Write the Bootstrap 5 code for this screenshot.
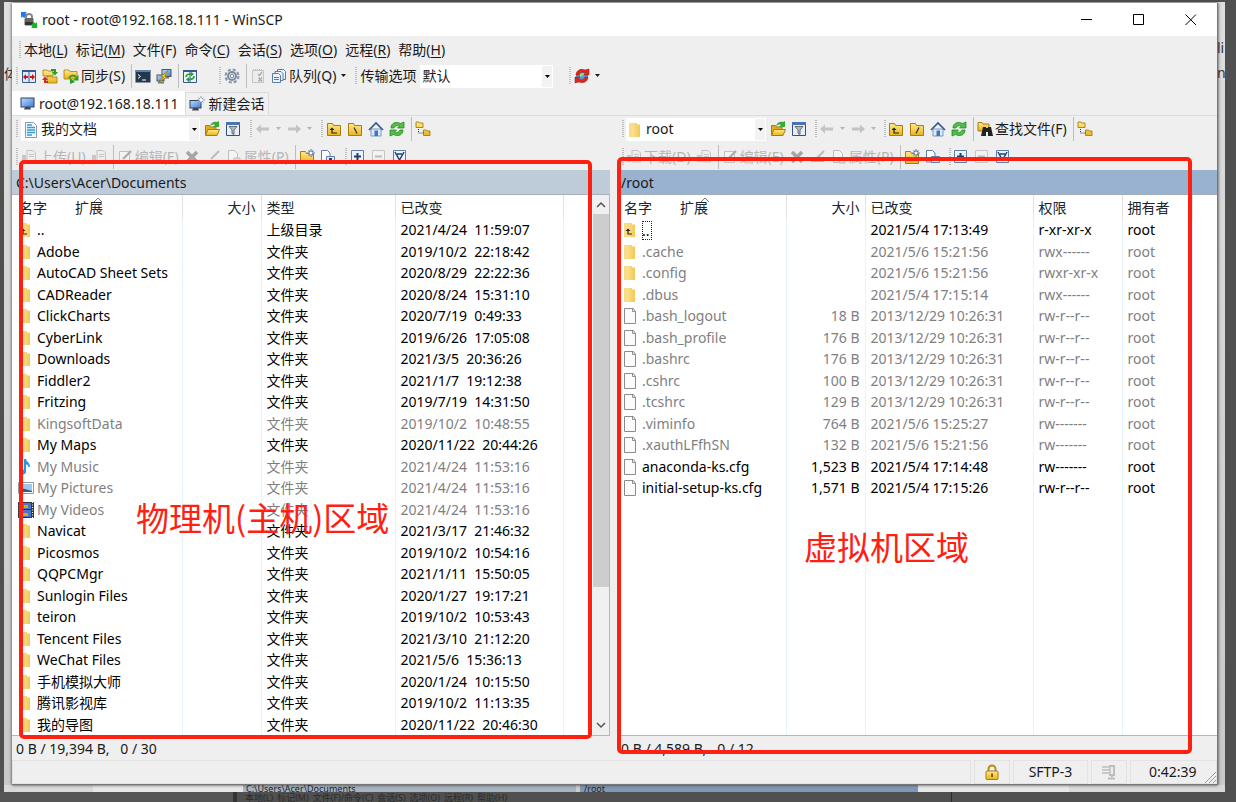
<!DOCTYPE html>
<html lang="zh-CN">
<head>
<meta charset="utf-8">
<meta name="viewport" content="width=device-width, initial-scale=1">
<title>root - root@192.168.18.111 - WinSCP</title>
<link href="https://cdn.jsdelivr.net/npm/bootstrap@5.3.0/dist/css/bootstrap.min.css" rel="stylesheet">
<style>
  :root { --face: #efefef; --mark-red: #ff2012; }
  body {
    background: #4f504f; color: #1a1a1a; font-size: 14px; line-height: 20px;
    font-family: "Noto Sans", "Noto Sans CJK SC", sans-serif;
  }
  svg { display: block; flex: none; }
  .ic { width: 16px; height: 16px; }
  u { text-underline-offset: 2px; text-decoration-thickness: 1px; }

  .backdrop { margin: 2px 11px 0 4px; padding: 1px 7px 0 8px; background: linear-gradient(#dedede, #c9c9c9); }
  .sliver { position: absolute; overflow: hidden; width: 8px; color: #333; white-space: nowrap; line-height: 20px; }
  .app { background: var(--face); box-shadow: 0 0 3px #333; border-right: 1px solid #777; border-bottom: 1px solid #777; }

  .titlebar { height: 33px; background: #fff; padding-left: 8px; }
  .win-btn { width: 52px; height: 33px; padding: 0; border: 0; background: none; display: flex; align-items: center; justify-content: center; }
  .menubar { height: 27px; padding-left: 3px; }
  .menubar a { color: #1a1a1a; text-decoration: none; margin-right: 8px; }

  .bar { height: 26px; white-space: nowrap; overflow: hidden; }
  .bar button { border: 0; background: none; padding: 0 5px 0 0; color: #1a1a1a; display: flex; align-items: center; gap: 2px; height: 24px; flex: none; }
  .bar button:disabled { color: #b5b5b5; }
  .bar button.drop { width: 15px; padding: 0; justify-content: center; }
  .bar-address { height: 24px; }
  .bar-address + .bar { margin-top: 3px; }
  .grip { width: 9px; height: 18px; flex: none; background: repeating-linear-gradient(#bdbdbd 0 1px, transparent 1px 2px) 4px 0 / 2px 100% no-repeat; }
  .grip-apart { margin-left: 12px; }
  .rule { width: 5px; height: 24px; flex: none; background: linear-gradient(#bdbdbd, #bdbdbd) 1px 0 / 1px 100% no-repeat; }
  .combo {
    appearance: none; border: 0; border-radius: 0; height: 23px; padding: 0 12px 0 2px; color: #1a1a1a; flex: none;
    background: url("data:image/svg+xml,%3Csvg xmlns='http://www.w3.org/2000/svg' width='11' height='23'%3E%3Cpath fill='%23f2f2f2' d='M0 1h10v21H0z'/%3E%3Cpath fill='%23000' d='M3 10h5L5.500 13z'/%3E%3C/svg%3E") right center no-repeat #fff;
  }
  .combo.with-icon { padding-left: 20px; }
  .combo-wrap { position: relative; flex: none; margin-right: 4px; }
  .combo-wrap svg { position: absolute; left: 2px; top: 4px; }

  .tabs { height: 24px; margin-top: 3px; border-bottom: 1px solid #dcdcdc; }
  .tabs button { height: 23px; border: 1px solid #dcdcdc; border-bottom: 0; background: #f0f0f0; padding: 0 4px 0 3px; display: flex; align-items: center; gap: 3px; color: #1a1a1a; }
  .tabs button.active { height: 24px; background: #fff; padding: 0 6px 0 7px; border-color: #fff; }

  .panes { gap: 9px; padding-top: 1px; }
  .pane { flex: 1 1 0; min-width: 0; position: relative; }
  .path { height: 25px; line-height: 25px; padding-left: 4px; background: #becbd9; border-bottom: 1px solid #a9b0ba; }
  .pane-remote .path { background: #98b2cf; padding-left: 2px; border-color: #a3aebb; }
  .pane-remote .grip { width: 7px; background-position: 3px 0; }
  .listing { background: #fff; border-bottom: 1px solid #b5b7c0; overflow: hidden; }

  .files { table-layout: fixed; height: 100%; margin: 0; }
  .files > :not(caption) > * > * {
    padding: 0 5px; border: 0; border-right: 1px solid #eaf2fb; color: inherit; background: none; white-space: pre; overflow: hidden; font-weight: 400; line-height: 20px; vertical-align: middle; box-shadow: none;
  }
  .files > thead > tr > th { border-right-color: #e2e2e2; padding-top: 2px; }
  .files > :not(caption) > * > *:last-child { border-right-color: transparent; }
  .files thead tr { height: 24px; }
  .files tbody tr { height: 21px; color: #000; }
  .files tbody tr:nth-child(odd) { height: 22px; }
  .files tbody tr.dim { color: #7f7f7f; }
  .files tbody tr.rest { height: auto; }
  .files td.num, .files th.num { text-align: right; }
  .fname { display: flex; align-items: center; gap: 3px; height: 20px; }
  .files .fcell { padding-left: 6px; }
  .pane-remote .files .fcell { padding-left: 4px; }
  .focus-box { outline: 1px dotted #222; outline-offset: -1px; height: 19px; line-height: 19px; padding-right: 2px; }
  .hname { padding-left: 2px; display: flex; position: relative; }
  .pane-remote .hname { padding-left: 0; }
  .hname span + span { margin-left: 28px; }
  .hname svg { position: absolute; left: 76px; top: -1px; }

  .scroll { width: 17px; background: #f0f0f0; border-right: 1px solid #b5b7c0; }
  .scroll .arrow { height: 19px; display: flex; align-items: center; justify-content: center; }
  .thumb { background: #cdcdcd; flex: 0 0 69%; }
  .track { flex: 1; }
  .pane-foot { height: 24px; line-height: 26px; padding-left: 4px; white-space: pre; }
  .pane-remote .pane-foot { padding-left: 2px; }

  .frame { position: absolute; border: 4px solid var(--mark-red); border-radius: 5px; pointer-events: none; }
  .frame-local { inset: 43px 18px 21px 7px; }
  .frame-remote { inset: 40px 25px 6px -2px; }
  .note { position: absolute; color: var(--mark-red); font: 400 33px/40px "Noto Sans CJK SC", sans-serif; white-space: nowrap; }
  .note-local { left: 124px; top: 380px; }
  .note-remote { left: 185px; top: 409px; }

  .statusbar { height: 24px; gap: 3px; }
  .statusbar > div { border: 1px solid #e3e3e3; display: flex; align-items: center; justify-content: center; }
  .w-icon { width: 36px; } .w-proto { width: 75px; } .w-time { width: 87px; padding-left: 8px; position: relative; }
  .statusbar > .w-time { justify-content: start; padding-left: 18px; }
  .w-time svg { position: absolute; right: 0; bottom: 0; }

  .under { height: 7px; overflow: hidden; font-size: 9px; line-height: 8px; color: #222; margin-left: -8px; margin-right: -7px; background: #d9d9d9; }
  .under div:nth-child(1) { width: 89px; }
  .under div:nth-child(2) { width: 150px; background: #e7e7e7; }
  .under div:nth-child(3) { width: 337px; background: #a8b4c0; padding-left: 3px; border-right: 4px solid #ccc; }
  .under div:nth-child(4) { width: 338px; background: #7f98b6; padding-left: 4px; }
  .under div:nth-child(5) { width: 151px; background: #e7e7e7; }
  .ghost-menu { height: 11px; overflow: hidden; font-size: 9px; line-height: 11px; color: #2b2b2b; white-space: nowrap; }
  .ghost-menu div:nth-child(1) { width: 233px; background: #555; }
  .ghost-menu div:nth-child(2) { width: 719px; border-left: 4px solid #333; border-right: 1px solid #2b2b2b; padding-left: 8px; gap: 4px; }
</style>
</head>
<body>

<svg width="0" height="0" class="position-absolute" aria-hidden="true">
  <defs>
    <linearGradient id="gold" x1="0" y1="0" x2="0" y2="1"><stop offset="0" stop-color="#ffe98a"/><stop offset="1" stop-color="#e9b41c"/></linearGradient>
    <linearGradient id="blue" x1="0" y1="0" x2="1" y2="1"><stop offset="0" stop-color="#b9dcff"/><stop offset="1" stop-color="#3c7fd6"/></linearGradient>
    <linearGradient id="pale" x1="0" y1="0" x2="1" y2="0"><stop offset="0" stop-color="#ffe9a2"/><stop offset="1" stop-color="#f3c956"/></linearGradient>
  </defs>
  <symbol id="i-app" viewBox="0 0 18 18"><path fill="#1f7bea" d="M1 1h6L5.500 2.500 7 4 4 7 2.500 5.500 1 7z"/><path fill="none" stroke="#888" stroke-width="2" d="M6 8V6a3 3 0 0 1 6 0v2"/><rect x="4.500" y="7" width="9" height="7.500" rx="1" fill="#666"/><path fill="#333" d="M5 11h8v3H5z"/><path fill="#17b51f" d="M17 17h-6l1.500-1.500L11 14l3-3 1.500 1.500L17 11z"/></symbol>
  <symbol id="i-cols" viewBox="0 0 16 16"><path fill="#dfe9f7" stroke="#35588f" d="M1.500 2.500h13v12h-13zM8 3v11"/><path fill="#35588f" d="M1 2h14v2H1z"/><path fill="#c4161c" d="M2 9l3-3v2h2v2H5v2zM14 9l-3-3v2H9v2h2v2z"/></symbol>
  <symbol id="i-fold" viewBox="0 0 16 16"><path fill="url(#gold)" stroke="#a97c0c" d="M1.500 2.500h5l1 2h7v10h-13z"/></symbol>
  <symbol id="i-cmp" viewBox="0 0 16 16"><path fill="url(#gold)" stroke="#a97c0c" stroke-width=".8" d="M1 2h4l1 1h5v5H1zM5 8h4l1 1h5v6H5z"/><path fill="none" stroke="#2a9c2a" stroke-width="2" d="M9 2h4v3"/><path fill="#2a9c2a" d="M10 4h6l-3 3.500z"/><path fill="none" stroke="#d62a20" stroke-width="2" d="M6 14H3v-3"/><path fill="#d62a20" d="M0 12h6L3 8.500z"/></symbol>
  <symbol id="i-sync" viewBox="0 0 16 16"><path fill="url(#gold)" stroke="#a97c0c" stroke-width=".8" d="M1 2h5l1 1.500h7V11H1z"/><path fill="none" stroke="#2a9c2a" stroke-width="2" d="M6 10c2-3 5-3 7-1"/><path fill="#2a9c2a" d="M15.500 7v5.500H10zM7 16V10l5 4z"/></symbol>
  <symbol id="i-term" viewBox="0 0 16 16"><rect x=".5" y="2" width="15" height="12.500" fill="#22384f"/><path fill="#5c7fa8" d="M.5 2h15v2H.5z"/><path fill="none" stroke="#fff" d="M3 6.500l2.500 2L3 10.500M7 12h4"/></symbol>
  <symbol id="i-putty" viewBox="0 0 16 16"><rect x="6" y="1.500" width="9" height="7" fill="url(#blue)" stroke="#555"/><rect x="1" y="7" width="7" height="6" fill="url(#blue)" stroke="#555"/><path fill="#777" d="M2 14h6v1.500H2zM9 9h4v1.500H9z"/><path fill="#ffd21a" stroke="#8a6b00" stroke-width=".6" d="M12 3L5 8l2.500 1L3 14l8-5-2.500-1z"/></symbol>
  <symbol id="i-brw" viewBox="0 0 16 16"><path fill="#eaf2fc" stroke="#35588f" d="M1.500 2.500h13v12h-13zM8 4v10"/><path fill="#35588f" d="M1 2h14v2H1z"/><path fill="none" stroke="#2a9c2a" stroke-width="1.600" d="M4 9c0-2 2-3 5-3M12 8c0 2-2 3.500-5 3.500"/><path fill="#2a9c2a" d="M9 4l3 2-3 2.500zM7 9l-3 2.500L7 14z"/></symbol>
  <symbol id="i-gear" viewBox="0 0 16 16"><circle cx="8" cy="8" r="6.500" fill="none" stroke="#8795a5" stroke-width="2" stroke-dasharray="3.100 2"/><circle cx="8" cy="8" r="4" fill="#d6dfe8" stroke="#7c8b9b" stroke-width="2"/><circle cx="8" cy="8" r="1.700" fill="#fff" stroke="#7c8b9b"/></symbol>
  <symbol id="i-check" viewBox="0 0 16 16"><path fill="#ececec" stroke="#c6c6c6" d="M2.500 2.500h11v12h-11z"/><path stroke="#bbb" stroke-dasharray="1 1" d="M3 1.500h10"/><path fill="none" stroke="#a8a8a8" stroke-width="1.300" d="M8 6l1.500 1.500L12 4M8.500 9.500l3.500 4M12 9.500l-3.500 4"/></symbol>
  <symbol id="i-queue" viewBox="0 0 16 16"><g fill="#edf3fa" stroke="#5b7da8"><path d="M6.500 1.500h6l2 2v8h-8z"/><path d="M4 3.500h6l2 2v7H4z"/><path d="M1.500 5.500h6l2 2v7h-8z"/><path d="M3 9.500h5M3 11.500h5"/></g></symbol>
  <symbol id="i-globe" viewBox="0 0 16 16"><circle cx="8" cy="8" r="6" fill="#4e9be6"/><path fill="#8fdc80" d="M6 5l4 0-1 3-3 1zM9 11l3-2-1 3z"/><path fill="#d92a22" stroke="#9c120d" stroke-width=".5" d="M2 7C2 3 6 0 11 2l4-1v6h-5l1.500-2C9 3.500 6 4 5 7zM14 9c0 4-4 7-9 5l-4 1V9h5l-1.500 2c2.500 1.500 5.500 1 6.500-2z"/></symbol>
  <symbol id="i-mon" viewBox="0 0 16 16"><rect x="1" y="2" width="13" height="9" fill="url(#blue)" stroke="#33435c"/><path fill="#445" d="M5 11h5l1 2.500H4z"/></symbol>
  <symbol id="i-monnew" viewBox="0 0 16 16"><rect x="1" y="4.500" width="11" height="7.500" fill="url(#blue)" stroke="#33435c"/><path fill="#445" d="M4 12h5l1 2.500H3z"/><path fill="none" stroke="#7f9bc0" d="M12 0v8M8 4h8M9.500 1.500l5 5M14.500 1.500l-5 5"/><circle cx="12" cy="4" r="1.700" fill="#fff"/></symbol>
  <symbol id="i-doc" viewBox="0 0 16 16"><path fill="#f7fbff" stroke="#8f9aa6" d="M2.500.5h8l3 3v12h-11z"/><path stroke="#2f9bd6" stroke-width="1.300" d="M4 5.500h8M4 8h8M4 10.500h8M4 13h5"/><path fill="#60b6e6" d="M4 2h5v2H4z"/></symbol>
  <symbol id="i-open" viewBox="0 0 16 16"><path fill="#e2ac1b" stroke="#a97c0c" d="M1.500 14V4.500h4l1 1.500H12v3"/><path fill="url(#gold)" stroke="#a97c0c" d="M1.500 14.500l2.500-6h11.500l-2.500 6z"/><path fill="#39a834" d="M6 5c1-4 5-5 7-4l2-1v6H9l2-2c-2-1-3 0-5 1z"/></symbol>
  <symbol id="i-filt" viewBox="0 0 16 16"><path fill="#e6eefa" stroke="#2d5288" d="M1.500 1.500h13v13h-13z"/><path fill="#4774b5" d="M1 1h14v3H1z"/><path fill="#b5b8bd" stroke="#555" stroke-width=".8" d="M4 5.500h8L9 9v4.500l-2-1V9z"/></symbol>
  <symbol id="i-back" viewBox="0 0 16 16"><path fill="#c4c4c4" d="M1 8l5-4.500v3h8v3H6v3z"/></symbol>
  <symbol id="i-fwd" viewBox="0 0 16 16"><path fill="#c4c4c4" d="M15 8l-5-4.500v3H2v3h8v3z"/></symbol>
  <symbol id="i-up" viewBox="0 0 16 16"><use href="#i-fold"/><path fill="none" stroke="#222" stroke-width="1.200" d="M6 8v4h5"/><path fill="#222" d="M3.500 9L6 6.500 8.500 9z"/></symbol>
  <symbol id="i-root" viewBox="0 0 16 16"><use href="#i-fold"/><path stroke="#333" stroke-width="1.300" d="M7 6.500l3 6"/></symbol>
  <symbol id="i-rootr" viewBox="0 0 16 16"><use href="#i-fold"/><path stroke="#333" stroke-width="1.300" d="M10 6.500l-3 6"/></symbol>
  <symbol id="i-home" viewBox="0 0 16 16"><path fill="#dcebfb" stroke="#7d97b9" d="M3 8h10v7H3z"/><path fill="#3d76c2" d="M6.500 9.500h3.500V15H6.500z"/><path fill="none" stroke="#2e5a94" stroke-width="1.600" d="M1 9l7-7 7 7"/></symbol>
  <symbol id="i-ref" viewBox="0 0 16 16"><path fill="#4fbf45" stroke="#1b7f1b" stroke-width=".7" d="M2 7C2 2 7 0 11.500 2.500L15 1v6H8.500L10.500 5C8 4 5.500 5 5 7zM14 9c0 5-5 7-9.500 4.500L1 15V9h6.500l-2 2c2.500 1 5 0 5.500-2z"/></symbol>
  <symbol id="i-tree" viewBox="0 0 16 16"><path fill="url(#gold)" stroke="#a97c0c" stroke-width=".9" d="M1 1h3l.7 1H8v4.500H1zM8.500 9h3l.7 1H15v4.500H8.500z"/><path fill="none" stroke="#333" stroke-dasharray="1 1" d="M3.500 8v4h5"/></symbol>
  <symbol id="i-find" viewBox="0 0 16 16"><path fill="url(#gold)" stroke="#a97c0c" d="M1 1.500h4l1 1.500h6v7H1z"/><path fill="#222" d="M6 6h3v1h2V6h3l2 9h-5v-4H9v4H4z"/></symbol>
  <symbol id="i-up2" viewBox="0 0 16 16"><path fill="#eee" stroke="#c2c2c2" d="M6 1.500h6l2.500 2.500v9H6z"/><path fill="#c6c6c6" d="M8 5h5v1H8zM8 7h5v1H8zM1 6h4v7H1z"/></symbol>
  <symbol id="i-edit" viewBox="0 0 16 16"><path fill="#f3f3f3" stroke="#c2c2c2" d="M2.500 2.500h10v11h-10z"/><path stroke="#aaa" stroke-width="2.200" d="M6 10l8-8"/></symbol>
  <symbol id="i-del" viewBox="0 0 16 16"><path stroke="#a5a5a5" stroke-width="3.500" d="M3 3l10 10M13 3L3 13"/></symbol>
  <symbol id="i-ren" viewBox="0 0 16 16"><path fill="none" stroke="#bcbcbc" stroke-width="2" d="M1 12h13M6 10l8-8"/></symbol>
  <symbol id="i-prop" viewBox="0 0 16 16"><path fill="#f4f4f4" stroke="#bdbdbd" d="M2.500 1.500h6l3 3v9h-9z"/><path fill="#ddd" stroke="#bdbdbd" d="M8 9h6v5H8z"/></symbol>
  <symbol id="i-newf" viewBox="0 0 16 16"><use href="#i-fold"/><path stroke="#5c7dab" stroke-width="1.100" d="M12 0v8M8 4h8M9.500 1.500l5 5M14.500 1.500l-5 5"/><circle cx="12" cy="4" r="1.500" fill="#fff"/></symbol>
  <symbol id="i-newd" viewBox="0 0 16 16"><path fill="#fff" stroke="#5d7fae" d="M1.500 1.500h6l2.500 2.500v9H1.500z"/><path fill="#dce7f5" stroke="#5d7fae" d="M6.500 7.500h8v6h-8z"/><path fill="#2d4468" d="M9 9h3v3H9z"/></symbol>
  <symbol id="i-plus" viewBox="0 0 16 16"><path fill="#edf3fb" stroke="#5d7fae" d="M1.500 1.500h12v12h-12z"/><path stroke="#21406f" stroke-width="2" d="M4 7.500h7M7.500 4v7"/></symbol>
  <symbol id="i-minus" viewBox="0 0 16 16"><path fill="#f2f2f2" stroke="#c5c5c5" d="M1.500 1.500h12v12h-12z"/><path stroke="#bbb" stroke-width="2" d="M4 7.500h7"/></symbol>
  <symbol id="i-vee" viewBox="0 0 16 16"><path fill="#edf3fb" stroke="#5d7fae" d="M1.500 1.500h12v12h-12z"/><path fill="none" stroke="#21406f" stroke-width="1.500" d="M3 3l4.500 8L12 3M5 5h5"/></symbol>
  <symbol id="i-dir" viewBox="0 0 16 16"><path fill="url(#pale)" d="M1 1h8v1.500h3V15H1z"/><path fill="#f9dc86" d="M1 1h2.500v14H1z"/></symbol>
  <symbol id="i-dirup" viewBox="0 0 16 16"><use href="#i-dir"/><path fill="none" stroke="#222" stroke-width="1.200" d="M5 8v4h4"/><path fill="#222" d="M2.500 9L5 6.500 7.500 9z"/></symbol>
  <symbol id="i-file" viewBox="0 0 16 16"><path fill="#fbfbfb" stroke="#8c8c8c" d="M1.500.5h9l2 3v12h-11z"/><path fill="none" stroke="#8c8c8c" d="M9.500.5v3h3"/></symbol>
  <symbol id="i-music" viewBox="0 0 16 16"><path fill="#1b9be8" d="M6 0h2c0 3 4 3 4 8h-1.500C10.500 6 9 5.500 8 5.500V13a3.500 2.600 0 1 1-2-2.300z"/></symbol>
  <symbol id="i-pic" viewBox="0 0 16 16"><path fill="#fff" stroke="#999" d="M.5 2.500h15v11H.5z"/><path fill="#9cc9ee" d="M2 4h12v8H2z"/><path fill="#2a5f86" d="M2 8l5 1 7 2v1H2z"/></symbol>
  <symbol id="i-vid" viewBox="0 0 16 16"><path fill="#333" d="M0 0h16v16H0z"/><path fill="#4977c8" d="M3 1h10v6H3zM3 8h10v7H3z"/><path fill="#e5a020" d="M6 3h4v3H6zM5 11h5v3H5z"/><path stroke="#fff" stroke-width="1.200" stroke-dasharray="1 1.500" d="M1.500 0v16M14.500 0v16"/></symbol>
  <symbol id="i-lock" viewBox="0 0 16 16"><path fill="none" stroke="#b98a1b" stroke-width="2" d="M4.500 8V5a3.500 3.500 0 0 1 7 0v3"/><rect x="2" y="7" width="12" height="8.500" rx="1" fill="url(#gold)" stroke="#a97c0c"/><path fill="#5c4100" d="M7.300 9.500h1.500v3.500H7.300z"/></symbol>
  <symbol id="i-zip" viewBox="0 0 16 16"><path fill="#c9c9c9" d="M1 2h9v8H1z"/><path stroke="#efefef" d="M1 4.500h7M1 7.500h7"/><path fill="none" stroke="#bdbdbd" stroke-width="2" d="M8 2h5v9H8M11 11v2M7 14.500h7"/></symbol>
  <symbol id="i-caret" viewBox="0 0 7 4"><path fill="currentColor" d="M1 0h5L3.500 3z"/></symbol>
</svg>

<div class="backdrop position-relative">
  <span class="sliver" style="left:0;top:62px">体</span>
  <span class="sliver" style="right:0;top:36px">li</span>
  <span class="sliver" style="right:0;top:61px">n</span>

  <main class="app position-relative">
    <header class="titlebar d-flex align-items-center">
      <svg width="18" height="18" class="me-1"><use href="#i-app"/></svg>
      <span class="flex-grow-1">root - root@192.168.18.111 - WinSCP</span>
      <button class="win-btn" aria-label="最小化"><svg width="12" height="12"><path stroke="#000" d="M0 5.500h11"/></svg></button>
      <button class="win-btn" aria-label="最大化"><svg width="12" height="12"><path fill="none" stroke="#000" d="M.5.5h10v10H.5z"/></svg></button>
      <button class="win-btn" aria-label="关闭"><svg width="12" height="12"><path stroke="#000" d="M.5.5l10.500 10.500M11 .5L.5 11"/></svg></button>
    </header>

    <nav class="menubar d-flex align-items-center">
      <i class="grip"></i>
      <a href="#">本地(<u>L</u>)</a><a href="#">标记(<u>M</u>)</a><a href="#">文件(F)</a><a href="#">命令(<u>C</u>)</a><a href="#">会话(<u>S</u>)</a><a href="#">选项(<u>O</u>)</a><a href="#">远程(<u>R</u>)</a><a href="#">帮助(<u>H</u>)</a>
    </nav>

    <div class="bar d-flex align-items-center" role="toolbar" aria-label="主工具栏">
      <i class="grip"></i>
      <button aria-label="比较面板"><svg class="ic"><use href="#i-cols"/></svg></button>
      <button aria-label="比较目录"><svg class="ic"><use href="#i-cmp"/></svg></button>
      <button><svg class="ic"><use href="#i-sync"/></svg>同步(S)</button>
      <i class="rule"></i>
      <button aria-label="终端"><svg class="ic"><use href="#i-term"/></svg></button>
      <button aria-label="PuTTY"><svg class="ic"><use href="#i-putty"/></svg></button>
      <i class="rule"></i>
      <button aria-label="同步浏览"><svg class="ic"><use href="#i-brw"/></svg></button>
      <i class="grip grip-apart"></i>
      <button aria-label="选项"><svg class="ic"><use href="#i-gear"/></svg></button>
      <i class="rule"></i>
      <button disabled aria-label="队列处理"><svg class="ic"><use href="#i-check"/></svg></button>
      <button class="pe-0"><svg class="ic"><use href="#i-queue"/></svg>队列(Q)</button>
      <button class="drop" aria-label="队列菜单"><svg width="7" height="4"><use href="#i-caret"/></svg></button>
      <i class="grip"></i>
      <label for="transfer" class="me-1">传输选项</label>
      <select id="transfer" class="combo" style="width:133px"><option>默认</option></select>
      <i class="grip grip-apart"></i>
      <button class="pe-0" aria-label="重新连接"><svg class="ic"><use href="#i-globe"/></svg></button>
      <button class="drop" aria-label="连接菜单"><svg width="7" height="4"><use href="#i-caret"/></svg></button>
    </div>

    <div class="tabs d-flex align-items-end" role="tablist">
      <button class="active" role="tab"><svg class="ic"><use href="#i-mon"/></svg>root@192.168.18.111</button>
      <button role="tab"><svg class="ic"><use href="#i-monnew"/></svg>新建会话</button>
    </div>

    <div class="panes d-flex">
      <section class="pane pane-local d-flex flex-column" id="local"></section>
      <section class="pane pane-remote d-flex flex-column" id="remote"></section>
    </div>

    <footer class="statusbar d-flex">
      <div class="flex-grow-1"></div>
      <div class="w-icon"><svg class="ic"><use href="#i-lock"/></svg></div>
      <div class="w-proto">SFTP-3</div>
      <div class="w-icon"><svg class="ic"><use href="#i-zip"/></svg></div>
      <div class="w-time">0:42:39<svg width="12" height="12"><path stroke="#9a9a9a" d="M1 12L12 1M5 12l7-7M9 12l3-3"/></svg></div>
    </footer>
  </main>
  <div class="under d-flex"><div></div><div></div><div>C:\Users\Acer\Documents</div><div>/root</div><div></div></div>
</div>
<div class="ghost-menu d-flex"><div></div><div class="d-flex"><span>本地(<u>L</u>)</span><span>标记(<u>M</u>)</span><span>文件(F)/命令(<u>C</u>)</span><span>会话(<u>S</u>)</span><span>选项(<u>O</u>)</span><span>远程(<u>R</u>)</span><span>帮助(<u>H</u>)</span></div></div>

<script>
  const icon = n => `<svg class="ic"><use href="#i-${n}"/></svg>`;
  const btn = (n, label, text = '', off = false) => `<button ${off ? 'disabled' : ''} aria-label="${label}">${icon(n)}${text}</button>`;
  const drop = `<button class="drop" disabled aria-label="历史"><svg width="7" height="4"><use href="#i-caret"/></svg></button>`;
  const arrow = n => `<button class="pe-0" disabled aria-label="${n}">${icon(n)}</button>${drop}`;
  const grip = '<i class="grip"></i>', rule = '<i class="rule"></i>';

  function pane(p) {
    const rows = p.rows.map(([ic, dim, name, ...cells]) =>
      `<tr class="${dim ? 'dim' : ''}"><td class="fcell"><div class="fname">${icon(ic)}<span class="${p.focus && name === '..' ? 'focus-box' : ''}">${name}</span></div></td>` +
      cells.map((c, i) => `<td class="${i ? '' : 'num'}">${c}</td>`).join('') + '<td></td></tr>').join('');
    const blank = p.rest ? `<tr class="rest">${'<td></td>'.repeat(p.cols.length)}</tr>` : '';
    return `
      <div class="bar bar-address d-flex align-items-center">${grip}
        <div class="combo-wrap">${icon(p.placeIcon)}<select class="combo with-icon" aria-label="位置" style="width:${p.comboWidth}px"><option>${p.place}</option></select></div>
        ${btn('open', '打开目录')}${btn('filt', '过滤')}${grip}${arrow('back')}${arrow('fwd')}${grip}
        ${btn('up', '上级目录')}${btn(p.rootIcon, '根目录')}${btn('home', '主目录')}${btn('ref', '刷新')}${rule}
        ${p.find ? btn('find', '查找文件', '查找文件(F)') + rule : ''}${btn('tree', '目录树')}</div>
      <div class="bar d-flex align-items-center">${grip}
        ${btn('up2', p.move, p.move, true)}${btn('up2', '后台传输', '', true)}${rule}
        ${btn('edit', '编辑', p.edit, true)}${btn('del', '删除', '', true)}${btn('ren', '重命名', '', true)}${btn('prop', '属性', '属性(P)', true)}${rule}
        ${btn('newf', '新建目录')}${btn('newd', '新建文件')}${grip}${btn('plus', '选择')}${btn('minus', '取消选择', '', true)}${btn('vee', '全选')}</div>
      <div class="path">${p.path}</div>
      <div class="listing d-flex flex-grow-1">
        <div class="flex-grow-1"><table class="table files"><colgroup>${p.cols.map(w => w ? `<col style="width:${w}px">` : '<col>').join('')}</colgroup>
          <thead><tr><th><div class="hname"><span>名字</span><span>扩展</span><svg width="10" height="6"><path fill="none" stroke="#777" d="M1 5l4-4 4 4"/></svg></div></th>
          ${p.heads.map((h, i) => `<th class="${i ? '' : 'num'}">${h}</th>`).join('')}<th></th></tr></thead>
          <tbody>${rows}${blank}</tbody></table></div>
        ${p.scroll ? `<div class="scroll d-flex flex-column flex-shrink-0"><div class="arrow"><svg width="10" height="7"><path fill="none" stroke="#555" stroke-width="1.500" d="M1 6l4-4 4 4"/></svg></div><div class="thumb"></div><div class="track"></div><div class="arrow"><svg width="10" height="7"><path fill="none" stroke="#555" stroke-width="1.500" d="M1 1l4 4 4-4"/></svg></div></div>` : ''}
      </div>
      <div class="pane-foot">${p.foot}</div>${p.marks}`;
  }

  const dir = (name, date, dim = 0, ic = 'dir') => [ic, dim, name, '', '文件夹', date];
  document.getElementById('local').innerHTML = pane({
    placeIcon: 'doc', place: '我的文档', comboWidth: 179, rootIcon: 'root', move: '上传(U)', edit: '编辑(E)',
    path: 'C:\\Users\\Acer\\Documents', cols: [170, 79, 134, 168, 0], heads: ['大小', '类型', '已改变'], scroll: true,
    foot: '0 B / 19,394 B,   0 / 30',
    marks: '<div class="frame frame-local"></div><div class="note note-local">物理机(主机)区域</div>',
    rows: [
      ['dirup', 0, '..', '', '上级目录', '2021/4/24  11:59:07'],
      dir('Adobe', '2019/10/2  22:18:42'), dir('AutoCAD Sheet Sets', '2020/8/29  22:22:36'),
      dir('CADReader', '2020/8/24  15:31:10'), dir('ClickCharts', '2020/7/19  0:49:33'),
      dir('CyberLink', '2019/6/26  17:05:08'), dir('Downloads', '2021/3/5  20:36:26'),
      dir('Fiddler2', '2021/1/7  19:12:38'), dir('Fritzing', '2019/7/19  14:31:50'),
      dir('KingsoftData', '2019/10/2  10:48:55', 1), dir('My Maps', '2020/11/22  20:44:26'),
      dir('My Music', '2021/4/24  11:53:16', 1, 'music'), dir('My Pictures', '2021/4/24  11:53:16', 1, 'pic'),
      dir('My Videos', '2021/4/24  11:53:16', 1, 'vid'), dir('Navicat', '2021/3/17  21:46:32'),
      dir('Picosmos', '2019/10/2  10:54:16'), dir('QQPCMgr', '2021/1/11  15:50:05'),
      dir('Sunlogin Files', '2020/1/27  19:17:21'), dir('teiron', '2019/10/2  10:53:43'),
      dir('Tencent Files', '2021/3/10  21:12:20'), dir('WeChat Files', '2021/5/6  15:36:13'),
      dir('手机模拟大师', '2020/1/24  10:15:50'), dir('腾讯影视库', '2019/10/2  11:13:35'),
      dir('我的导图', '2020/11/22  20:46:30')
    ]
  });
  document.getElementById('remote').innerHTML = pane({
    placeIcon: 'dir', place: 'root', comboWidth: 140, rootIcon: 'rootr', find: true, move: '下载(D)', edit: '编辑(E)', focus: true, rest: true,
    path: '/root', cols: [167, 79, 168, 89, 70, 0], heads: ['大小', '已改变', '权限', '拥有者'],
    foot: '0 B / 4,589 B,   0 / 12',
    marks: '<div class="frame frame-remote"></div><div class="note note-remote">虚拟机区域</div>',
    rows: [
      ['dirup', 0, '..', '', '2021/5/4 17:13:49', 'r-xr-xr-x', 'root'],
      ['dir', 1, '.cache', '', '2021/5/6 15:21:56', 'rwx------', 'root'],
      ['dir', 1, '.config', '', '2021/5/6 15:21:56', 'rwxr-xr-x', 'root'],
      ['dir', 1, '.dbus', '', '2021/5/4 17:15:14', 'rwx------', 'root'],
      ['file', 1, '.bash_logout', '18 B', '2013/12/29 10:26:31', 'rw-r--r--', 'root'],
      ['file', 1, '.bash_profile', '176 B', '2013/12/29 10:26:31', 'rw-r--r--', 'root'],
      ['file', 1, '.bashrc', '176 B', '2013/12/29 10:26:31', 'rw-r--r--', 'root'],
      ['file', 1, '.cshrc', '100 B', '2013/12/29 10:26:31', 'rw-r--r--', 'root'],
      ['file', 1, '.tcshrc', '129 B', '2013/12/29 10:26:31', 'rw-r--r--', 'root'],
      ['file', 1, '.viminfo', '764 B', '2021/5/6 15:25:27', 'rw-------', 'root'],
      ['file', 1, '.xauthLFfhSN', '132 B', '2021/5/6 15:21:56', 'rw-------', 'root'],
      ['file', 0, 'anaconda-ks.cfg', '1,523 B', '2021/5/4 17:14:48', 'rw-------', 'root'],
      ['file', 0, 'initial-setup-ks.cfg', '1,571 B', '2021/5/4 17:15:26', 'rw-r--r--', 'root']
    ]
  });
</script>
<script src="https://cdn.jsdelivr.net/npm/bootstrap@5.3.0/dist/js/bootstrap.bundle.min.js"></script>
</body>
</html>
